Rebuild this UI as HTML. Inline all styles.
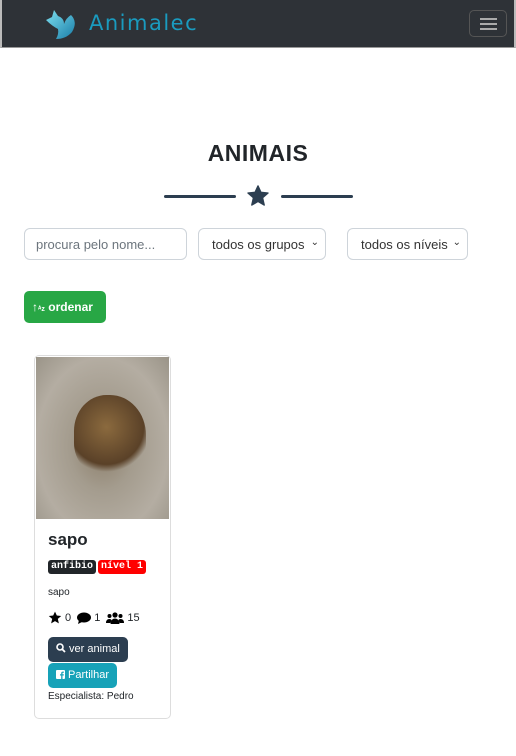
<!DOCTYPE html>
<html><head><meta charset="utf-8"><style>
*{box-sizing:border-box;margin:0;padding:0}
body{width:516px;height:756px;background:#fff;font-family:"Liberation Sans",sans-serif;position:relative;overflow:hidden;color:#212529}
.nav{position:absolute;left:0;top:0;width:516px;height:48px;background:#2e3237;border-left:2px solid #bbb;border-right:2px solid #bbb;border-bottom:1px solid #999}
.brand{position:absolute;left:87px;top:11px;font-size:21px;color:#1a9bbf;letter-spacing:1.5px;font-family:"DejaVu Sans",sans-serif}
.tog{position:absolute;left:467px;top:10px;width:38px;height:27px;border:1px solid #555;border-radius:5px}
.tog i{position:absolute;left:10px;width:17px;height:2px;background:#aaa}
h1{position:absolute;top:140px;width:100%;text-align:center;font-size:23px;font-weight:bold;letter-spacing:0.5px}
.line{position:absolute;top:195px;height:3px;width:72px;background:#2c3e50;border-radius:2px}
.inp{position:absolute;top:228px;height:32px;border:1px solid #ced4da;border-radius:6px;font-size:13px;padding:8px 11px;color:#333}
.inp.s{padding-left:13px}
.inp .ch{position:absolute;right:6px;top:8px;font-size:10px}
.btn{position:absolute;color:#fff;border-radius:5px;font-size:11px;padding-left:8px}
.card{position:absolute;left:34px;top:355px;width:137px;height:364px;border:1px solid #ddd;border-radius:5px}
.img{position:absolute;left:1px;top:1px;width:133px;height:162px;background:radial-gradient(ellipse at 50% 55%,#8a7c68 0,#a49c8e 35%,#b4ada2 70%,#9a9488 100%)}
.badge{position:absolute;top:204px;height:14px;font:bold 10px "Liberation Mono",monospace;color:#fff;border-radius:3px;padding:1px 3px;line-height:12px}
</style></head><body>
<div class="nav">
<svg style="position:absolute;left:42px;top:8px" width="36" height="32" viewBox="0 0 36 32"><defs><linearGradient id="g" x1="0" y1="0" x2="1" y2="1"><stop offset="0" stop-color="#7ee0f0"/><stop offset="1" stop-color="#1a7ea8"/></linearGradient></defs><path d="M2 12 L8 9 L10 2 L14 8 Q20 10 20 16 Q22 10 27 7 Q34 14 28 24 Q22 31 12 31 Q15 26 14 21 Q8 18 2 12Z" fill="url(#g)"/></svg>
<div class="brand">Animalec</div>
<div class="tog"><i style="top:7px"></i><i style="top:12px"></i><i style="top:17px"></i></div>
</div>
<h1>ANIMAIS</h1>
<div class="line" style="left:164px"></div>
<div class="line" style="left:281px"></div>
<svg style="position:absolute;left:247px;top:185px" width="22" height="21" viewBox="0 0 24 23"><path d="M12 1 L15.2 8 L23 8.8 L17 14 L18.8 22 L12 18 L5.2 22 L7 14 L1 8.8 L8.8 8Z" fill="#2c3e50" stroke="#2c3e50" stroke-linejoin="round" stroke-width="1.5"/></svg>
<div class="inp" style="left:24px;width:163px;color:#6c757d">procura pelo nome...</div>
<div class="inp s" style="left:198px;width:128px">todos os grupos<span class="ch">⌄</span></div>
<div class="inp s" style="left:347px;width:121px">todos os níveis<span class="ch">⌄</span></div>
<div class="btn" style="left:24px;top:291px;width:82px;height:32px;background:#28a745;line-height:32px;font-size:12px;font-weight:bold">↑<span style="font-size:7px">ᴬᴢ</span> ordenar</div>
<div class="card">
<div class="img"><div style="position:absolute;left:38px;top:38px;width:72px;height:80px;border-radius:45% 50% 40% 40%;background:radial-gradient(circle at 45% 40%,#8b6a3e,#5a4128 60%,transparent 72%)"></div></div>
<div style="position:absolute;left:13px;top:174px;font-size:17px;font-weight:bold">sapo</div>
<div class="badge" style="left:13px;background:#212529">anfibio</div>
<div class="badge" style="left:63px;background:#f00">nível 1</div>
<div style="position:absolute;left:13px;top:231px;font-size:10px">sapo</div>
<div style="position:absolute;left:13px;top:255px;font-size:11px;display:flex;align-items:center;gap:3px">
<svg width="14" height="13" viewBox="0 0 24 23"><path d="M12 1 L15.2 8 L23 8.8 L17 14 L18.8 22 L12 18 L5.2 22 L7 14 L1 8.8 L8.8 8Z" fill="#000"/></svg>0&nbsp;
<svg width="14" height="12" viewBox="0 0 14 12"><ellipse cx="7" cy="5.5" rx="7" ry="5" fill="#000"/><path d="M2 8 L1 12 L5 10Z" fill="#000"/></svg>1&nbsp;
<svg width="18" height="12" viewBox="0 0 18 12"><circle cx="9" cy="3" r="2.6"/><circle cx="3.5" cy="4" r="2"/><circle cx="14.5" cy="4" r="2"/><path d="M4.5 12 Q5 6.5 9 6.5 Q13 6.5 13.5 12Z M0 11 Q0 7 3.5 7 Q5 7 5.5 8 L4.5 11Z M18 11 Q18 7 14.5 7 Q13 7 12.5 8 L13.5 11Z"/></svg>15</div>
<div class="btn" style="left:13px;top:281px;width:80px;height:25px;background:#2c3e50;line-height:25px"><svg width="10" height="10" viewBox="0 0 10 10" style="vertical-align:-1px"><circle cx="4" cy="4" r="3" fill="none" stroke="#fff" stroke-width="1.6"/><path d="M6 6 L9 9" stroke="#fff" stroke-width="1.8"/></svg> ver animal</div>
<div class="btn" style="left:13px;top:307px;width:69px;height:25px;background:#17a2b8;line-height:25px"><svg width="9" height="9" viewBox="0 0 9 9" style="vertical-align:-1px"><rect width="9" height="9" rx="1" fill="#fff"/><path d="M6.5 9 V5.5 H7.8 V4.3 H6.5 V3.4 Q6.5 2.8 7.1 2.8 H7.9 V1.6 H6.8 Q5.2 1.6 5.2 3.2 V4.3 H4 V5.5 H5.2 V9Z" fill="#17a2b8"/></svg> Partilhar</div>
<div style="position:absolute;left:13px;top:335px;font-size:10px">Especialista: Pedro</div>
</div>
</body></html>
